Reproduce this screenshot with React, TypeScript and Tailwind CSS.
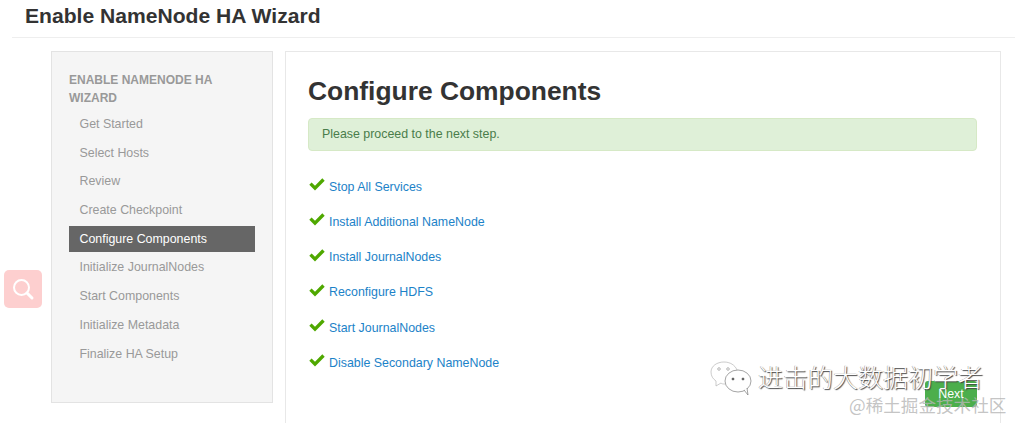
const steps = [
  "Get Started",
  "Select Hosts",
  "Review",
  "Create Checkpoint",
  "Configure Components",
  "Initialize JournalNodes",
  "Start Components",
  "Initialize Metadata",
  "Finalize HA Setup",
];

const tasks = [
  "Stop All Services",
  "Install Additional NameNode",
  "Install JournalNodes",
  "Reconfigure HDFS",
  "Start JournalNodes",
  "Disable Secondary NameNode",
];

function Check() {
  return (
    <svg width="16" height="13" viewBox="0 0 16 13" className="shrink-0">
      <path d="M0.3 6.8 L2.6 4.4 L6 7.7 L13.3 0.3 L15.7 2.7 L6 12.4 Z" fill="#4fa800" />
    </svg>
  );
}

function WeChat() {
  return (
    <svg width="42" height="36" viewBox="0 0 42 36" fill="none" stroke="#666" strokeWidth="0.6">
      <path d="M27 9 C25 4 20 1 14 1 C7 1 1 5 1 11 C1 15 3 18 6 20 L6 25 L11 22 C12 23 13 23 15 23" stroke="#aaa" fill="#fff" />
      <ellipse cx="28" cy="20" rx="13" ry="11" fill="#fff" />
      <path d="M34 29 L38 34 L37 27" fill="#fff" />
      <circle cx="9" cy="8" r="1.3" stroke="#888" />
      <circle cx="18" cy="8" r="1.3" stroke="#888" />
      <circle cx="23" cy="18" r="1.1" fill="#444" />
      <circle cx="33" cy="18" r="1.1" fill="#444" />
    </svg>
  );
}

export default function App() {
  return (
    <div className="relative w-[1015px] h-[423px] overflow-hidden bg-white font-['Liberation_Sans',Arial,sans-serif] text-[#333]">
      <div className="ml-3 h-[38px] border-b border-[#eeeeee] pl-[13px] pt-[3px]">
        <h1 className="text-[21.1px] leading-[26px] font-bold text-[#333]">Enable NameNode HA Wizard</h1>
      </div>

      <div className="flex items-start gap-3 pl-[51px] pt-[13px]">
        <div className="w-[222px] h-[352px] shrink-0 border border-[#e3e3e3] bg-[#f5f5f5] pl-[17px] pr-[17px] pt-[19px]">
          <div className="text-[12px] leading-[18px] font-bold uppercase text-[#999]">Enable NameNode HA Wizard</div>
          <ul className="mt-[4px] flex flex-col gap-[2.7px]">
            {steps.map((step) => (
              <li
                key={step}
                className={`h-[26px] pl-[10.5px] text-[12.4px] leading-[26px] ${
                  step === "Configure Components" ? "bg-[#666] text-white" : "text-[#999]"
                }`}
              >
                {step}
              </li>
            ))}
          </ul>
        </div>

        <div className="w-[716px] h-[400px] shrink-0 border border-[#e8e8e8] pl-[22px] pr-[23px] pt-[22px]">
          <h2 className="text-[26.4px] leading-[34px] font-bold text-[#333]">Configure Components</h2>
          <div className="mt-[10px] h-[33px] rounded-[4px] border border-[#d6e9c6] bg-[#dff0d8] pl-[13px] text-[12.4px] leading-[30px] text-[#4a7d4b]">
            Please proceed to the next step.
          </div>
          <ul className="mt-[26.5px] flex flex-col gap-[17.3px]">
            {tasks.map((task) => (
              <li key={task} className="flex h-[18px] items-center gap-[4px] pl-[1px] text-[12.4px] leading-[18px] text-[#1c82c8]">
                <span className="-mt-[4px] flex"><Check /></span>
                <span>{task}</span>
              </li>
            ))}
          </ul>
        </div>
      </div>

      {/* floating search button */}
      <div className="absolute left-[4px] top-[270px] flex h-[38px] w-[38px] items-center justify-center rounded-[5px] bg-[#fdcfcf]">
        <svg width="24" height="24" viewBox="0 0 24 24" fill="none" stroke="#fff" strokeWidth="2">
          <circle cx="10.5" cy="10.5" r="7.5" />
          <path d="M16 16 L21 21" strokeWidth="3" strokeLinecap="round" />
        </svg>
      </div>

      {/* watermark */}
      <div className="absolute left-[710px] top-[361px]">
        <WeChat />
      </div>
      <div className="absolute left-[925px] top-[381px] h-[26px] w-[52px] rounded-[3px] bg-[#4cae4c]" />
      <div className="absolute left-[758px] top-[360px] font-['Noto_Sans_CJK_SC',sans-serif] text-[25px] leading-[32px] font-light text-white [text-shadow:1px_1px_1px_#444,-0.5px_-0.5px_0.5px_#999]">
        进击的大数据初学者
      </div>
      <div className="absolute left-[849px] top-[395px] font-['Noto_Sans_CJK_SC',sans-serif] text-[17.6px] leading-[20px] text-[#b5b5b5]/80">
        @稀土掘金技术社区
      </div>
      {/* next button label sits over the watermark in the picture */}
      <div className="absolute left-[925px] top-[385px] w-[52px] text-center text-[12.4px] leading-[18px] text-white">
        Next
      </div>
    </div>
  );
}
